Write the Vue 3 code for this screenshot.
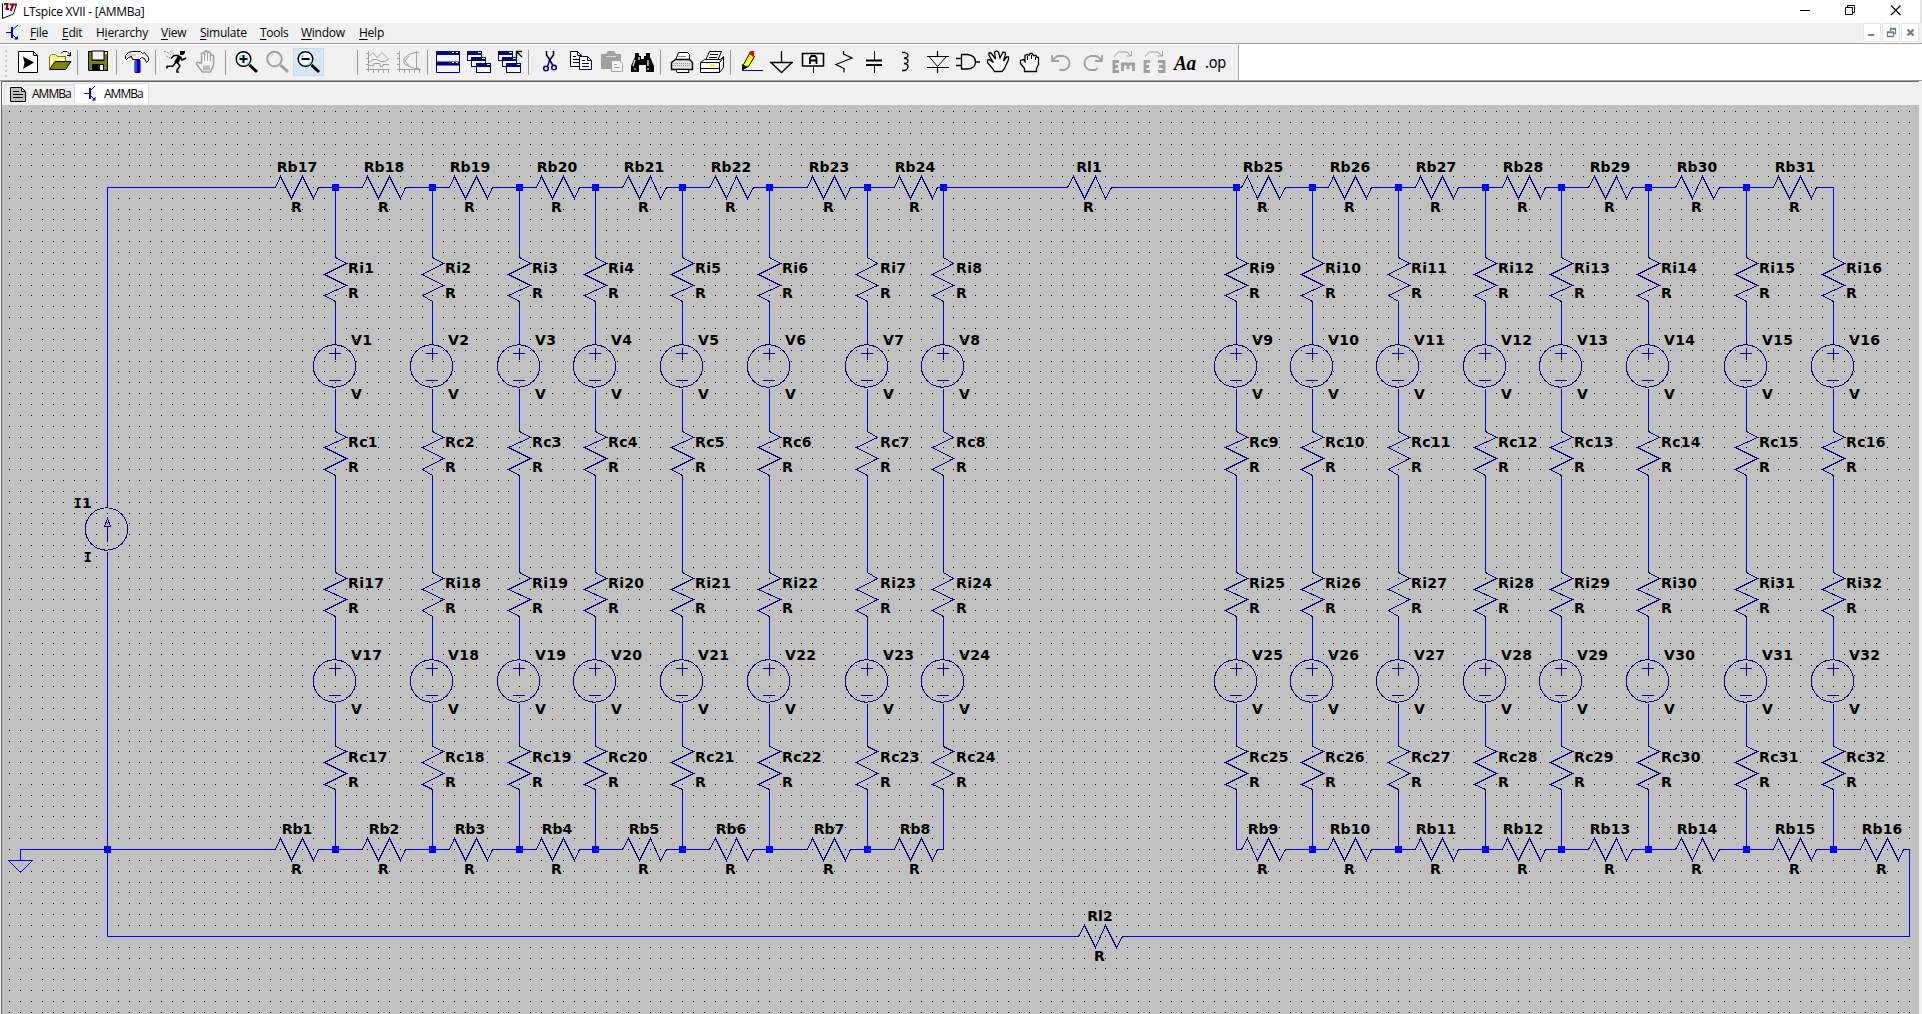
<script setup>
const menus = [
  { k: 'F', t: 'ile', w: 32 },
  { k: 'E', t: 'dit', w: 34 },
  { pre: 'H', k: 'i', t: 'erarchy', w: 65 },
  { k: 'V', t: 'iew', w: 39 },
  { k: 'S', t: 'imulate', w: 60 },
  { k: 'T', t: 'ools', w: 41 },
  { k: 'W', t: 'indow', w: 58 },
  { k: 'H', t: 'elp', w: 40 },
]

const G = '#a0a0a0'
const lens = (c) => `<circle cx="12.5" cy="11" r="7.3" fill="${c === '#000' ? '#f4f4f4' : 'none'}" stroke="${c}" stroke-width="${c === '#000' ? 1.4 : 2}"/><path d="M18.5 17l7.5 7" stroke="${c}" stroke-width="3"/>`
const shine = '<path d="M8.5 9.5l2-2.5M15 17l3-2.5" stroke="#00ffff" stroke-width="1.6"/>'
const win = (x, y) => `<rect x="${x + 0.5}" y="${y + 0.5}" width="14" height="9" fill="#fff" stroke="#000080"/><path d="M${x} ${y + 2}h15" stroke="#000080" stroke-width="4"/><path d="M${x + 11} ${y + 1.5}h3" stroke="#fff"/>`
const axes = `<path d="M5.5 3v21M3 21.5h24M3 5.5h2M3 10.5h2M3 16.5h2M10.5 22v3M15.5 22v3M20.5 22v3M25.5 22v3" stroke="${G}" fill="none"/>`

const tools = [
  { b: '<path d="M5.5 3.5h15l4 4v17h-19z" fill="#fff" stroke="#000"/><path d="M20.5 3.5v4h4" fill="none" stroke="#000"/><path d="M10 8.5l11 6-11 6.500 1.500-6z" fill="#000"/>' },
  { b: '<path d="M5.500 20.500v-12l2-2h4l2 2h8v5" fill="#ffff99" stroke="#808000"/><path d="M5.500 21.500l5.500-8h16l-5.500 8z" fill="#808000" stroke="#000"/><path d="M17 5.500l2-2h4l3 3v2M23 7.500h4M26.500 4v4" fill="none" stroke="#000"/>' },
  { sep: true },
  { b: '<path d="M5 3h20v20h-19l-1-1z" fill="#000"/><path d="M6 4h3v9h12v-9h3v18h-18z" fill="#808000"/><rect x="9" y="3" width="12" height="9" fill="#f4f4f4" stroke="#000"/><path d="M9 16h12v7h-12z" fill="#000"/><path d="M17 17h3v5h-3z" fill="#f4f4f4"/><path d="M22 4h2v2h-2z" fill="#ddd"/>' },
  { sep: true },
  { b: '<path d="M3.500 10.500v-3l3-3 4-1h8l2 2 2-1 4 5v3l-2 2-2-4-3-1-2 2h-7l-1-3-3 1-2 2z" fill="#f4f4f4" stroke="#000"/><path d="M6 7h8" stroke="#aaa"/><path d="M13 12.500h5v12h-5z" fill="#0000e0" stroke="#000080"/><path d="M14 12v12" stroke="#6688ff"/>' },
  { sep: true },
  { b: '<path d="M19 3h5v2l-2 2h-3z" fill="#000"/><path d="M19 8l-4 7" stroke="#000" stroke-width="4"/><path d="M18 7.500h-5l-3 3M19 9l2 3 4-2M15 14l-3 4-6 .5v2M16 14l3 4-3 4v2h2" fill="none" stroke="#000" stroke-width="1.500"/><path d="M3 3.500l4 1 4 3M5 8l4 2M9 3l4 3" stroke="#888" fill="none" stroke-dasharray="2 1"/>' },
  { b: `<path d="M9.500 15v-9q1.500-2 3 0v-2q1.500-2 3 0v1q1.500-2 3 0v3q2-2 3 0v9l-3 7h-8l-6-8q0-3 3-1z" fill="#f4f4f4" stroke="${G}" stroke-width="1.500"/><path d="M12.500 6v7M15.500 5v8M18.500 7v6" stroke="${G}"/><path d="M11 20h7" stroke="#bbb" stroke-width="5"/>` },
  { sep: true },
  { b: lens('#000') + shine + '<path d="M8.500 11h8M12.500 7v8" stroke="#000" stroke-width="2"/>' },
  { b: lens(G) + '<path d="M9 9l2-3" stroke="#ccc"/>' },
  { on: true, b: lens('#000') + shine + '<path d="M8.500 11h8" stroke="#000" stroke-width="2"/>' },
  { blank: true },
  { sep: true },
  { b: axes + `<path d="M6 8.500l4-4 4 5 5-5 6 6M6 14.500l4-3h3l5 2h4l4-3M6 17.500h5v-2h6v3h3v-2h6" stroke="${G}" fill="none"/>` },
  { b: axes + `<path d="M25 4.500h-4l-6 2-5 4v5l5 3 6 2h4M22.500 3v17M15 8l-4 5 4 5" stroke="${G}" fill="none"/>` },
  { sep: true },
  { b: '<path d="M3.500 3.500h23v21h-23z" fill="#f4f4f4" stroke="#000080"/><path d="M3 5h24M3 15.500h24" stroke="#000080" stroke-width="4"/><path d="M19 4.500h2M23 4.500h2M19 14.500h2M23 14.500h2" stroke="#fff"/>' },
  { b: win(3, 3) + win(7, 9) + win(12, 15) },
  { b: win(3, 3) + win(7, 9) + win(11, 15) + '<path d="M21.500 9v-5.500h5.500M22 4l5 5" fill="none" stroke="#000" stroke-width="1.400"/>' },
  { sep: true },
  { b: '<path d="M12.500 3v4l4 6M19.500 3v4l-4.500 6" fill="none" stroke="#000" stroke-width="1.500"/><circle cx="12" cy="20.500" r="2.300" fill="none" stroke="#000080" stroke-width="1.500"/><circle cx="20" cy="19.500" r="2.300" fill="none" stroke="#000080" stroke-width="1.500"/><path d="M15.500 12.500l-2 6M16 12.500l3 5" stroke="#000080" stroke-width="1.500"/>' },
  { b: '<path d="M5.500 3.500h7l4 4v11h-11z" fill="#fff" stroke="#000"/><path d="M12.500 3.500v4h4M8 8.500h3M8 11.500h6M8 14.500h6" stroke="#000" fill="none"/><path d="M14.500 8.500h8l4 4v9h-12z" fill="#fff" stroke="#000080"/><path d="M22.500 8.500v4h4M17 12.500h3M17 15.500h7M17 18.500h7" stroke="#000080" fill="none"/>' },
  { b: `<path d="M5 6h5l2-3h6l2 3h5v15h-20z" fill="${G}"/><path d="M10 8.500h10" stroke="#ddd"/><path d="M15.500 12.500h8l3 3v8h-11z" fill="#f4f4f4" stroke="${G}"/><path d="M18 16.500h3M18 19.500h6" stroke="${G}"/>` },
  { b: '<path d="M8 5h4v3h2v3h3v-3h2v-3h4v4l4 9v6h-8v-7h-7v7h-8v-6l4-9z" fill="#000"/><path d="M8 12l-2 6M21 12v6M12 9v3M7 21h2M20 21h2" stroke="#fff" stroke-width="1.200"/>' },
  { sep: true },
  { b: '<path d="M9.500 12.500l3-8h9l2 2v6" fill="#fff" stroke="#000"/><path d="M12 8.500h8" stroke="#888"/><path d="M5.500 14.500l4-3h14l3 3v7h-21z" fill="#e0e0e0" stroke="#000" stroke-width="1.400"/><path d="M7 15.500h18M7 17.500h18" stroke="#999" stroke-dasharray="1 1"/><path d="M10 21.500h12l1 3h-12z" fill="#fff" stroke="#000"/>' },
  { b: '<path d="M8.500 12.500l4-9h12l-4 9z" fill="#fff" stroke="#000"/><path d="M13 6.500h8M12 9.500h8" stroke="#000"/><path d="M3.500 14.500l4-3h16l3-3v11l-4 5h-19z" fill="#fff" stroke="#000"/><path d="M3.500 14.500h19v10M22.500 14.500l4-5M4 20.500h18" fill="none" stroke="#000"/><path d="M13 17.500h5" stroke="#ffe000" stroke-width="2"/>' },
  { sep: true },
  { b: '<path d="M7.500 16.500l6-11 5 3-6 10-6 3z" fill="#ff0" stroke="#000"/><path d="M6 22v-6l6 3z" fill="#000"/><path d="M13 4l2-1h3v4l-1 2z" fill="#e00000"/><path d="M6 22.500h21" stroke="#00f"/>' },
  { b: '<path d="M14.500 3v11M3 14.500h23M4 14.500l10.500 10 10.500-10" fill="none" stroke="#000" stroke-width="1.300"/>' },
  { b: '<path d="M4.500 5.500h21v12.500h-21z" fill="#f4f4f4" stroke="#000" stroke-width="1.600"/><path d="M15.500 19v6" stroke="#000"/><path d="M12 16v-6l1.500-2h3.500l1.500 2v6M12 12.500h7" fill="none" stroke="#000" stroke-width="1.800"/>' },
  { b: '<path d="M14.500 3v3l8.500 4-16 6.500 8 4v4" fill="none" stroke="#000" stroke-width="1.200"/>' },
  { b: '<path d="M14.500 3v9M14.500 18v7" stroke="#000"/><path d="M6 12.500h16M6 17h16" stroke="#000" stroke-width="2"/>' },
  { b: '<path d="M11 4.500h3q3 1 3 3t-4 2.500q4 .500 4 3t-4 2.500q4 .500 4 3t-3 4h-3" fill="none" stroke="#000" stroke-width="1.300"/>' },
  { b: '<path d="M5 8.500h22M5 19.500h22M15.500 3v5M15.500 19v6" stroke="#000" stroke-width="1.200"/><path d="M7 8.500l8.500 10 9-10" fill="none" stroke="#000"/>' },
  { b: '<path d="M8.500 6.500h6q8 1 8 7.500t-8 7h-6zM3 10.500h5M3 17.500h5M22 14h5" fill="none" stroke="#000" stroke-width="1.300"/>' },
  { b: '<path d="M10.500 23.500l-2-3-5-6v-2.500l2-.5 4 3-4.500-7v-2.500h2l4.500 6-1-7 2-1 2 1 1.500 6 3-6 2 .5.500 1.500-2 7 3-4h2v2.500l-4 9-2.500 3z" fill="#fff" stroke="#000" stroke-width="1.300"/>' },
  { b: '<path d="M9.500 23.500v-3l-4-5v-3l3-1 1.500 2v-6l2-1 2 1 1-2h2l1.500 2h2.500l1 2h1.500v7l-2 4v3z" fill="#fff" stroke="#000" stroke-width="1.300"/><path d="M12.500 8v4M16.500 7v4M20.500 9v3" stroke="#000"/>' },
  { b: `<path d="M6 7v6h7M6.500 12l5-4h6q6 2 6 7t-5 7h-5" fill="none" stroke="${G}" stroke-width="1.800"/>` },
  { b: `<path d="M25 7v6h-7M24.500 12l-5-4h-6q-6 2-6 7t5 7h6l2-2" fill="none" stroke="${G}" stroke-width="1.800"/>` },
  { b: `<path d="M11 13.500h-5v10h5M5 18.500h5M13 16h14M14.500 16v7M20 16v5M25.500 16v7" fill="none" stroke="${G}" stroke-width="2.800"/><path d="M6 9l4-5h9l4 4M23.500 3v5h-5" fill="none" stroke="${G}"/>` },
  { b: `<path d="M11 13.500h-5v10h5M5 18.500h5M19 13.500h6v10h-6M25 18.500h-5" fill="none" stroke="${G}" stroke-width="2.800"/><path d="M6 9l4-5h9l4 4M23.500 3v5h-5" fill="none" stroke="${G}"/>` },
  { b: '<text x="4" y="22" font-family="Liberation Serif, serif" font-size="20" font-weight="bold" font-style="italic" textLength="22" lengthAdjust="spacingAndGlyphs">Aa</text>' },
  { b: '<text x="4" y="20" font-family="Noto Sans, sans-serif" font-size="17" textLength="21" lengthAdjust="spacingAndGlyphs">.op</text>' },
]

// Schematic grid: pitch and origin in canvas pixels (canvas starts below the tab strip)
const P = 10.8545
const X = (n) => Math.round(9.11 + n * P) - 2 + 0.5
const Y = (m) => Math.round(110.944 + m * P) - 105 + 0.5

let dots = ''
for (let m = 0; m <= 83; m++) for (let n = 0; n <= 175; n++) dots += `M${X(n) - 0.5} ${Y(m)}h1`

const cols = [30, 39, 47, 54, 62, 70, 79, 86, 113, 120, 128, 136, 143, 151, 160, 168]
const segs = []
const parts = []
const labels = []
const squares = []
const circles = []
const wire = (a, b, c, d) => segs.push(`M${X(a)} ${Y(b)}L${X(c)} ${Y(d)}`)

const resV = (n, m, name) => {
  const p = [[0, 0], [0, 0.5], [1, 1], [-1, 2], [1, 3], [-1, 4], [0, 4.5], [0, 5]]
  parts.push('M' + p.map(([a, b]) => `${X(n + a)} ${Y(m + b)}`).join('L'))
  labels.push({ t: name, x: X(n) + 12.5, y: Y(m + 0.5) + 15.5, s: true }, { t: 'R', x: X(n) + 12.5, y: Y(m + 0.5) + 40.5 })
}
const resH = (n, m, name) => {
  const p = [[0, 0], [0.5, 0], [1, -1], [2, 1], [3, -1], [4, 1], [4.5, 0], [5, 0]]
  parts.push('M' + p.map(([a, b]) => `${X(n + a)} ${Y(m + b)}`).join('L'))
  labels.push({ t: name, x: X(n + 2.5) - 0.5, y: Y(m) - 15.5, a: 'middle' }, { t: 'R', x: X(n + 2.5) - 1, y: Y(m) + 24.5, a: 'middle' })
}
const source = (n, m, name) => {
  const x = X(n)
  const c = Y(m + 2.5)
  parts.push(`M${x} ${Y(m)}V${Y(m + 0.5)}M${x} ${Y(m + 4.5)}V${Y(m + 5)}`)
  parts.push(`M${x - 6.5} ${c - 13}h12M${x} ${c - 19}v12M${x - 6.5} ${c + 14}h12`)
  circles.push({ x: x - 1, y: c - 0.5 })
  labels.push({ t: name, x: x + 15.5, y: c - 22, s: true }, { t: 'V', x: x + 15.5, y: c + 32 })
}

cols.forEach((n, i) => {
  const k = i + 1
  resV(n, 13, 'Ri' + k)
  source(n, 21, 'V' + k)
  resV(n, 29, 'Rc' + k)
  resV(n, 42, 'Ri' + (k + 16))
  source(n, 50, 'V' + (k + 16))
  resV(n, 58, 'Rc' + (k + 16))
  ;[[7, 13], [18, 21], [26, 29], [34, 42], [47, 50], [55, 58], [63, 68]].forEach(([a, b]) => wire(n, a, n, b))
  if (k < 16) squares.push([n, 7])
  if (n !== 86 && n !== 113) squares.push([n, 68])
})
squares.push([9, 68])

const left = [24, 32, 40, 48, 56, 64, 73, 81]
const right = [113, 121, 129, 137, 145, 153, 162]
const rail = (m, start, list, end) => {
  let at = start
  list.forEach(([n, name]) => {
    if (n > at) wire(at, m, n, m)
    resH(n, m, name)
    at = n + 5
  })
  if (end > at) wire(at, m, end, m)
}
rail(7, 9, [...left.map((n, i) => [n, 'Rb' + (17 + i)]), [97, 'Rl1'], ...right.map((n, i) => [n, 'Rb' + (25 + i)])], 168)
rail(68, 1, left.map((n, i) => [n, 'Rb' + (1 + i)]), 86)
rail(68, 113, [...right, 170].map((n, i) => [n, 'Rb' + (9 + i)]), 175)
rail(76, 9, [[98, 'Rl2']], 175)
wire(9, 7, 9, 36)
wire(9, 41, 9, 76)
wire(175, 68, 175, 76)
wire(1, 68, 1, 69)

// Current source and ground
const ix = X(9)
const iy = Y(38.5)
parts.push(`M${ix} ${Y(36)}V${Y(36.5)}M${ix} ${Y(40.5)}V${Y(41)}M${ix} ${iy + 12}V${iy - 3}M${ix - 3} ${iy - 3}h6l-3 -8z`)
circles.push({ x: ix - 1, y: iy - 0.5 })
segs.push(`M${X(1) - 12} ${Y(69)}h24l-12 12z`)

const wires = segs.join('')
const symbols = parts.join('')
</script>

<template>
  <div class="app">
    <header class="title">
      <svg class="logo" width="18" height="20" viewBox="0 0 18 20">
        <path d="M2.500 3.500v15l11-4.500 3-10" fill="#fff" stroke="#000" />
        <path d="M4 4h3.500l-1 5h2.500M9.500 4.500h7.500M13.500 4l-3 7" fill="none" stroke="#900010" stroke-width="2" />
      </svg>
      <span class="caption">LTspice XVII - [AMMBa]</span>
      <svg class="winctl" width="120" height="23" viewBox="0 0 120 23" fill="none" stroke="#000">
        <path d="M0 10.500h10" />
        <path d="M45.500 7.500h7v7h-7zM47.500 7v-1.500h7v7h-2" />
        <path d="M91 5.500l9.500 9.500M100.500 5.500l-9.500 9.500" stroke-width="1.200" />
      </svg>
    </header>

    <nav class="menu">
      <svg class="npn" width="14" height="18" viewBox="0 0 14 18" fill="none" stroke="#00f">
        <path d="M0 8.500h5M12 1l-6.500 5.500" /><path d="M6 3v11" stroke-width="2" /><path d="M6 10l5 5" /><path d="M8 15.500h4v-4z" fill="#00f" stroke="none" />
      </svg>
      <span v-for="m in menus" :key="m.k + m.t" class="item" :style="{ width: m.w + 'px' }">{{ m.pre }}<u>{{ m.k }}</u>{{ m.t }}</span>
      <div class="mdi">
        <svg width="17" height="17"><path d="M4 11h6" stroke="#708090" stroke-width="2" /></svg>
        <svg width="17" height="17"><path d="M4.500 8.500h6v4h-6zM7.500 7v-2.500h5v5h-2M4 8h7M7 5h6" fill="none" stroke="#708090" stroke-width="1.300" /></svg>
        <svg width="17" height="17"><path d="M5.500 5.500l6 6M11.500 5.500l-6 6" stroke="#708090" stroke-width="2.400" /></svg>
      </div>
    </nav>

    <div class="toolrow">
      <div class="toolbar">
        <div class="grip"></div>
        <template v-for="(t, i) in tools" :key="i">
          <div v-if="t.sep" class="sep"></div>
          <div v-else-if="t.blank" class="tool"></div>
          <div v-else class="tool" :class="{ on: t.on }">
            <svg width="31" height="28" viewBox="0 0 31 28" v-html="t.b"></svg>
          </div>
        </template>
      </div>
    </div>

    <div class="tabs">
      <div class="tab">
        <svg width="17" height="17" viewBox="0 0 17 17"><path d="M.500 1.500h11l4 4v10h-15z" fill="#c0c0c0" stroke="#000" /><path d="M11.500 1.500v4h4M3 5.500h6M3 8.500h10M3 11.500h10" fill="none" stroke="#000" /></svg>
        <span>AMMBa</span>
      </div>
      <div class="tab active">
        <svg width="14" height="18" viewBox="0 0 14 18" fill="none" stroke="#00f">
          <path d="M0 8.500h5M11 1l-5.500 5.500" /><path d="M6 3v11" stroke-width="2" /><path d="M6 10l5 5" /><path d="M8 15.500h3.500v-4z" fill="#00f" stroke="none" />
        </svg>
        <span>AMMBa</span>
      </div>
    </div>

    <main class="sheet">
      <svg width="1917" height="909" viewBox="0 0 1917 909">
        <g fill="none" shape-rendering="crispEdges">
          <path :d="dots" stroke="#000" />
          <path :d="wires" stroke="#0000ff" stroke-linecap="square" />
          <path :d="symbols" stroke="#000080" />
          <circle v-for="(c, i) in circles" :key="i" :cx="c.x" :cy="c.y" r="21.200" stroke="#000080" />
        </g>
        <rect v-for="(s, i) in squares" :key="i" :x="X(s[0]) - 3.5" :y="Y(s[1]) - 3.5" width="7" height="7" fill="#0000ff" />
        <g class="lbl">
          <text v-for="(l, i) in labels" :key="i" :x="l.x" :y="l.y" :text-anchor="l.a" :class="{ wide: l.s }">{{ l.t }}</text>
          <text :x="ix - 34" :y="iy - 22"><tspan class="serifed">I</tspan>1</text>
          <text :x="ix - 24" :y="iy + 32"><tspan class="serifed">I</tspan></text>
        </g>
      </svg>
    </main>
  </div>
</template>

<style>
html,
body {
  margin: 0;
  overflow: hidden;
  background: #f0f0f0;
}
</style>

<style scoped>
.app {
  width: 1922px;
  height: 1014px;
  display: flex;
  flex-direction: column;
  overflow: hidden;
  font: 12px/20px "Open Sans", "Noto Sans", sans-serif;
  letter-spacing: -0.25px;
  color: #000;
  background: #f0f0f0;
}
.title {
  height: 23px;
  flex: none;
  display: flex;
  background: #fff;
  box-sizing: border-box;
  border-right: 2px solid #e5e5e5;
}
.logo {
  flex: none;
}
.caption {
  margin-left: 5px;
  line-height: 24px;
}
.winctl {
  margin-left: auto;
}
.menu {
  height: 20px;
  flex: none;
  display: flex;
  border-bottom: 1px solid #a0a0a0;
}
.npn {
  margin: 1px 10px 0 6px;
}
.item {
  line-height: 20px;
  white-space: nowrap;
}
.item u {
  text-underline-offset: 2px;
}
.mdi {
  display: flex;
  gap: 1px;
  margin-left: auto;
  margin-right: 3px;
  background: #fff;
}
.mdi svg {
  background: #fff;
  border: 1px solid #e2e2e2;
  box-sizing: border-box;
  width: 18px;
  height: 19px;
}
.toolrow {
  height: 36px;
  flex: none;
  display: flex;
  background: #fff;
  border-bottom: 1px solid #a0a0a0;
}
.toolbar {
  width: 1238px;
  display: flex;
  box-sizing: content-box;
  border-right: 1px solid #a0a0a0;
  margin-top: 1px;
  padding-top: 3px;
  background: #f0f0f0;
}
.grip {
  width: 3px;
  height: 27px;
  margin: 2px 5px 0 5px;
  background: repeating-linear-gradient(#c4c4c4 0 2px, transparent 2px 5px);
  background-size: 2px 100%;
  background-repeat: no-repeat;
}
.tool {
  width: 31px;
  height: 28px;
  flex: none;
}
.tool.on {
  background: #d9e6f2;
  box-shadow: inset 0 0 0 1px #c0dcf3;
}
.sep {
  width: 1px;
  height: 25px;
  margin: 2px 5px 0 2px;
  flex: none;
  background: #999;
}
.tabs {
  height: 23px;
  flex: none;
  display: flex;
  border-top: 1px solid #696969;
  border-left: 1px solid #696969;
  margin-left: 1px;
  margin-right: 3px;
  padding-left: 2px;
}
.tab {
  width: 70px;
  height: 19px;
  margin-top: 2px;
  border: solid #dcdcdc;
  border-width: 1px 0 0 1px;
  box-sizing: border-box;
  display: flex;
  align-items: center;
  padding-left: 5px;
  gap: 5px;
  letter-spacing: -1px;
}
.tab.active {
  width: 75px;
  height: 20px;
  margin-top: 1px;
  background: #fff;
  padding-left: 9px;
  gap: 6px;
  border-right-width: 1px;
}
.sheet {
  flex: 1;
  margin: 0 3px 0 1px;
  border-left: 1px solid #696969;
  background: #c0c0c0;
}
.sheet svg {
  display: block;
}
.lbl {
  font: bold 14px "DejaVu Sans", sans-serif;
  letter-spacing: 0;
}
.wide {
  letter-spacing: 0.35px;
}
.serifed {
  font-family: "DejaVu Sans Mono", monospace;
}
</style>
